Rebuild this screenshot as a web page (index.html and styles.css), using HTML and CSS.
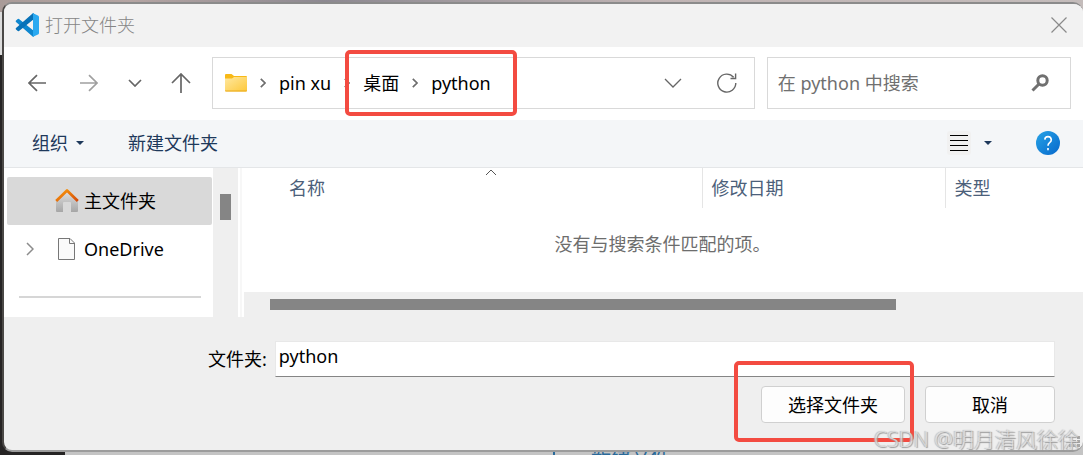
FILE: index.html
```html
<!DOCTYPE html>
<html lang="zh-CN">
<head>
    <meta charset="UTF-8">
    <meta name="viewport" content="width=device-width, initial-scale=1.0">
    <title>打开文件夹</title>
    <link rel="stylesheet" href="styles.css">
</head>
<body>
    <!-- Editor behind the dialog -->
    <div class="editor-link">新建文件</div>

    <main class="dialog">
        <!-- Title bar -->
        <header class="title-bar">
            <svg class="logo" width="24" height="24" viewBox="0 0 24 24">
                <path d="M1 7.5L2.8 6Q3.4 5.7 4 6.1L19 18V23.6Q18 24 17.3 23.3L1 9Q.3 8.2 1 7.5z" fill="#0f87cf"/>
                <path d="M1 16.5L2.8 18Q3.4 18.3 4 17.9L19 6V.4Q18 0 17.3.7L1 15Q.3 15.8 1 16.5z" fill="#0872b8"/>
                <path d="M18 .2L23 2.4Q24 3 24 4V20Q24 21 23 21.6L18 23.8Q17.2 24 16.8 23.6Q18 24 18 22.5V1.5Q18 0 16.8.4Q17.2 0 18 .2z" fill="#29a9f1"/>
            </svg>
            <h1 class="title">打开文件夹</h1>
            <button class="icon-button close" aria-label="关闭">
                <svg width="16" height="16" viewBox="0 0 16 16"><path d="M.5.5l15 15M15.5.5l-15 15"/></svg>
            </button>
        </header>

        <!-- Navigation -->
        <nav class="nav-bar">
            <div class="nav-buttons">
                <button class="icon-button arrow" aria-label="后退">
                    <svg width="18" height="18" viewBox="0 0 18 18"><path d="M18 9H1M9 1.2L1 9l8 7.8"/></svg>
                </button>
                <button class="icon-button arrow disabled" aria-label="前进">
                    <svg width="18" height="18" viewBox="0 0 18 18"><path d="M0 9h17M9 1.2L17 9l-8 7.8"/></svg>
                </button>
                <button class="icon-button recent" aria-label="最近位置">
                    <svg width="14" height="8" viewBox="0 0 14 8"><path d="M1 1l6 6 6-6"/></svg>
                </button>
                <button class="icon-button arrow" aria-label="上移">
                    <svg width="20" height="20" viewBox="0 0 20 20"><path d="M10 20V1M1 10l9-9 9 9"/></svg>
                </button>
            </div>
            <div class="address">
                <svg class="folder" width="22" height="18" viewBox="0 0 22 18">
                    <defs>
                        <linearGradient id="folder-fill" x1="0" y1="0" x2="1" y2="1">
                            <stop offset="0" stop-color="#ffe8a0"/>
                            <stop offset="1" stop-color="#fdc83a"/>
                        </linearGradient>
                    </defs>
                    <path d="M0 1Q0 0 1 0H6.500L9 2H21Q22 2 22 3V10H0z" fill="#f8b917"/>
                    <path d="M0 4.500H7L9 3H22V16.500Q22 17.500 21 17.500H1Q0 17.500 0 16.500z" fill="url(#folder-fill)"/>
                    <path d="M0 16.500H22Q22 17.500 21 17.500H1Q0 17.500 0 16.500z" fill="#eaa91a"/>
                </svg>
                <svg class="crumb-arrow" width="6" height="10" viewBox="0 0 6 10"><path d="M.8.8L5 5 .8 9.200"/></svg>
                <a class="crumb" href="#">pin xu</a>
                <svg class="crumb-arrow" width="6" height="10" viewBox="0 0 6 10"><path d="M.8.8L5 5 .8 9.200"/></svg>
                <span class="crumb-group">
                    <a class="crumb" href="#">桌面</a>
                    <svg class="crumb-arrow" width="6" height="10" viewBox="0 0 6 10"><path d="M.8.8L5 5 .8 9.200"/></svg>
                    <a class="crumb" href="#">python</a>
                    <span class="highlight highlight-path"></span>
                </span>
                <button class="icon-button history" aria-label="以前的位置">
                    <svg width="18" height="10" viewBox="0 0 18 10"><path d="M1 1l8 8 8-8"/></svg>
                </button>
                <button class="icon-button refresh" aria-label="刷新">
                    <svg width="20" height="20" viewBox="0 0 20 20"><path d="M18.800 10A9 9 0 1 1 16.600 4.200M18.600.5V5.500H13.500"/></svg>
                </button>
            </div>
            <div class="search">
                <input class="search-input" type="text" placeholder="在 python 中搜索" aria-label="搜索">
                <svg class="search-icon" width="18" height="18" viewBox="0 0 18 18">
                    <circle cx="11.500" cy="6.500" r="4.700"/>
                    <path d="M8 10L1.500 16.500"/>
                </svg>
            </div>
        </nav>

        <!-- Commands -->
        <div class="toolbar">
            <button class="command">组织 <span class="caret"></span></button>
            <button class="command">新建文件夹</button>
            <button class="command view" aria-label="更改视图">
                <svg width="24" height="24" viewBox="0 0 24 24">
                    <rect width="24" height="24" rx="3" fill="#f1f1f1"/>
                    <path d="M3 4.500h18M3 9.500h18M3 14.500h18M3 19.500h18" stroke="#000"/>
                </svg>
                <span class="caret"></span>
            </button>
            <button class="help" aria-label="帮助">
                <svg width="24" height="24" viewBox="0 0 24 24">
                    <path d="M8.800 8.600Q9 5.600 12 5.600T15.300 8.700Q15.300 10.400 13.600 11.700T12 14.800M12 17v2.200" fill="none" stroke="#fff" stroke-width="1.600"/>
                </svg>
            </button>
        </div>

        <!-- Folder tree and file list -->
        <div class="browser">
            <aside class="tree">
                <a class="tree-item selected" href="#">
                    <span class="expander"></span>
                    <svg width="24" height="24" viewBox="0 0 24 24">
                        <defs>
                            <linearGradient id="house-wall" x1="0" y1="0" x2="0" y2="1">
                                <stop offset="0" stop-color="#e0e0e0"/>
                                <stop offset="1" stop-color="#a6a6a6"/>
                            </linearGradient>
                            <linearGradient id="house-roof" x1="0" y1="0" x2="1" y2="1">
                                <stop offset="0" stop-color="#fb9d0b"/>
                                <stop offset="1" stop-color="#d44a0c"/>
                            </linearGradient>
                        </defs>
                        <path d="M1 12L12 2l11 10v10q0 1-1 1h-6v-9q0-1-1-1H9q-1 0-1 1v9H2q-1 0-1-1z" fill="url(#house-wall)"/>
                        <path d="M1.200 12L12 1.500 22.800 12" fill="none" stroke="url(#house-roof)" stroke-width="2.800" stroke-linejoin="round"/>
                    </svg>
                    <span>主文件夹</span>
                </a>
                <a class="tree-item" href="#">
                    <span class="expander">
                        <svg width="8" height="14" viewBox="0 0 8 14"><path d="M1 1l6 6-6 6" fill="none" stroke="#8c8c8c" stroke-width="1.500"/></svg>
                    </span>
                    <svg width="24" height="24" viewBox="0 0 24 24">
                        <path d="M3.500 1.500h11.500l4.500 4.500v16.500h-16z" fill="#fafafa" stroke="#777"/>
                        <path d="M14.500 1.500v5h5" fill="none" stroke="#777"/>
                    </svg>
                    <span>OneDrive</span>
                </a>
                <hr class="tree-divider">
            </aside>
            <div class="tree-scroll"><div class="tree-thumb"></div></div>
            <section class="files">
                <table class="file-table">
                    <thead>
                        <tr>
                            <th class="col-name">名称
                                <svg class="sort" width="12" height="7" viewBox="0 0 12 7"><path d="M1 6l5-5 5 5"/></svg>
                            </th>
                            <th class="col-date">修改日期</th>
                            <th class="col-type">类型</th>
                        </tr>
                    </thead>
                    <tbody>
                        <tr><td class="empty" colspan="3">没有与搜索条件匹配的项。</td></tr>
                    </tbody>
                </table>
                <div class="file-scroll"><div class="file-thumb"></div></div>
            </section>
        </div>

        <!-- Folder name and actions -->
        <footer class="footer">
            <div class="name-row">
                <label class="name-label" for="folder-name">文件夹:</label>
                <input class="name-input" id="folder-name" type="text" value="python">
            </div>
            <div class="actions">
                <span class="primary-action">
                    <button class="action">选择文件夹</button>
                    <span class="highlight highlight-action"></span>
                </span>
                <button class="action cancel">取消</button>
            </div>
            <svg class="grip" width="11" height="11" viewBox="0 0 11 11">
                <path d="M8 0h3v3H8zM4 4h3v3H4zM8 4h3v3H8zM0 8h3v3H0zM4 8h3v3H4zM8 8h3v3H8z" fill="#a8a8a8"/>
            </svg>
        </footer>
    </main>

    <div class="watermark">CSDN @明月清风徐徐</div>
</body>
</html>
```
FILE: styles.css
```css
/* Reset and base styles */
* {
    margin: 0;
    padding: 0;
    box-sizing: border-box;
}

body {
    position: relative;
    overflow: hidden;
    padding: 2px 0 3px 2px;
    background:
        linear-gradient(90deg, #a99b98, #b5a5a3 12%, #8d8991 30%, #c0b4b4 60%, #c4bcbb) top / 100% 12px no-repeat,
        linear-gradient(#dcdcdc, #dcdcdc) 0 12px / 4px 43px no-repeat,
        linear-gradient(#262424, #262424) left / 65px 100% no-repeat,
        #c4c4c4;
    font-family: "Noto Sans", "Noto Sans CJK SC", sans-serif;
    font-size: 18px;
    line-height: 24px;
    color: #000;
}

button,
input {
    border: none;
    background: none;
    font: inherit;
    color: inherit;
}

a {
    color: inherit;
    text-decoration: none;
}

svg {
    display: block;
    flex: none;
}

.editor-link {
    position: absolute;
    left: 553px;
    bottom: -14px;
    padding-left: 36px;
    border-left: 2px solid #2a6a9a;
    font-size: 20px;
    color: #2a6a9a;
}

/* Dialog window */
.dialog {
    position: relative;
    overflow: hidden;
    border: 2px solid #8b8b8b;
    border-left-color: #4a4846;
    border-right: none;
    border-bottom-color: #9c9c9c;
    border-radius: 10px;
    background: #efefef;
}

/* Title bar */
.title-bar {
    display: flex;
    align-items: center;
    gap: 6px;
    height: 43px;
    padding: 0 16px 2px 11px;
    background: #f2f2f2;
}

.title {
    font-size: 18px;
    font-weight: 300;
    color: #858585;
}

.icon-button {
    display: flex;
    align-items: center;
    justify-content: center;
    height: 30px;
    fill: none;
    stroke: #666;
    stroke-width: 1.7;
}

.close {
    margin-left: auto;
    stroke: #8a8a8a;
    stroke-width: 1.2;
}

/* Navigation */
.nav-bar {
    display: flex;
    gap: 12px;
    padding: 10px 12px 11px 18px;
    background: #fff;
}

.nav-buttons {
    display: flex;
    align-items: center;
    gap: 22px;
    margin-right: 4px;
}

.arrow {
    width: 30px;
}

.disabled {
    stroke: #a0a0a0;
}

.recent {
    width: 18px;
}

.address,
.search {
    display: flex;
    align-items: center;
    height: 52px;
    border: 1px solid #d9d9d9;
}

.address {
    flex: 1;
    padding: 0 17px 0 12px;
}

.crumb-arrow {
    margin: 0 13px;
    fill: none;
    stroke: #6e6e6e;
    stroke-width: 1.7;
}

.crumb-group {
    position: relative;
    display: flex;
    align-items: center;
}

.history {
    margin-left: auto;
    stroke-width: 1.3;
}

.refresh {
    margin-left: 35px;
    stroke-width: 1.4;
}

.search {
    flex: none;
    width: 29%;
    padding: 0 21px 0 10px;
}

.search-input {
    flex: 1;
    min-width: 0;
}

.search-input::placeholder {
    color: #707070;
}

.search-icon {
    fill: none;
    stroke: #707070;
    stroke-width: 3;
}

/* Red frames around the parts to click */
.highlight {
    position: absolute;
    border: 4px solid #f34b41;
    border-radius: 5px;
    pointer-events: none;
}

.highlight-path {
    inset: -21px -26px -21px -18px;
}

.highlight-action {
    inset: -25px -9px -19px -27px;
}

/* Commands */
.toolbar {
    display: flex;
    align-items: center;
    height: 48px;
    padding: 0 23px 2px 28px;
    border-bottom: 1px solid #e4e6e8;
    background: #f4f6f8;
    color: #1e395b;
}

.command {
    display: flex;
    align-items: center;
    gap: 8px;
    margin-right: 44px;
}

.caret {
    border: 4px solid transparent;
    border-top-color: #1e395b;
    border-bottom: none;
}

.view {
    gap: 13px;
    margin-left: auto;
}

.help {
    width: 24px;
    height: 24px;
    border-radius: 50%;
    background: linear-gradient(135deg, #27a3e6, #0668cc);
}

/* Folder tree and file list */
.browser {
    display: flex;
    background: #fff;
}

.tree {
    flex: none;
    width: 209px;
    padding: 9px 1px 0 3px;
}

.tree-item {
    display: flex;
    align-items: center;
    gap: 5px;
    height: 48px;
    border-radius: 2px;
}

.selected {
    background: #d9d9d9;
}

.expander {
    width: 43px;
    padding-left: 19px;
}

.tree-divider {
    margin: 23px 11px 0 12px;
    border: none;
    border-top: 2px solid #d6d6d6;
}

.tree-scroll {
    flex: none;
    width: 25px;
    padding: 26px 7px 0;
    background: #efefef;
}

.tree-thumb {
    height: 26px;
    background: #858585;
}

.files {
    flex: 1;
    margin-left: 2px;
    border-left: 2px solid #f7f7f7;
    padding-left: 2px;
}

.file-table {
    width: 100%;
    table-layout: fixed;
    border-collapse: collapse;
}

.file-table th {
    position: relative;
    height: 40px;
    padding-left: 9px;
    border-right: 1px solid #e5e5e5;
    text-align: left;
    font-weight: 400;
    color: #4c607a;
}

.file-table .col-name {
    width: 458px;
    padding-left: 45px;
}

.col-date {
    width: 243px;
}

.file-table .col-type {
    border-right: none;
}

.sort {
    position: absolute;
    top: 1px;
    left: 50%;
    margin-left: 12px;
    fill: none;
    stroke: #555;
}

.empty {
    height: 84px;
    padding: 0 2px 13px 0;
    text-align: center;
    color: #6d6d6d;
}

.file-scroll {
    height: 25px;
    padding: 7px 30px 7px 26px;
    background: #efefef;
}

.file-thumb {
    width: 80%;
    height: 11px;
    background: #858585;
}

/* Folder name and actions */
.footer {
    position: relative;
    padding: 24px 28px 27px;
}

.name-row {
    display: flex;
    align-items: center;
    gap: 8px;
    padding-left: 176px;
}

.name-input {
    flex: 1;
    min-width: 0;
    height: 36px;
    padding: 0 3px 6px;
    border: 1px solid #e8e8e8;
    border-bottom-color: #858585;
    background: #fff;
}

.actions {
    display: flex;
    justify-content: flex-end;
    gap: 20px;
    margin-top: 9px;
}

.primary-action {
    position: relative;
}

.action {
    width: 144px;
    height: 37px;
    border: 1px solid #d0d0d0;
    border-radius: 4px;
    background: #fdfdfd;
}

.cancel {
    width: 130px;
}

.grip {
    position: absolute;
    right: 3px;
    bottom: 3px;
}

.watermark {
    position: absolute;
    right: 4px;
    bottom: 4px;
    white-space: nowrap;
    font-size: 21px;
    font-weight: 300;
    color: rgba(225, 225, 225, 0.8);
    text-shadow: 1px 1px 1px #999, -1px 0 1px #bbb;
}
```
